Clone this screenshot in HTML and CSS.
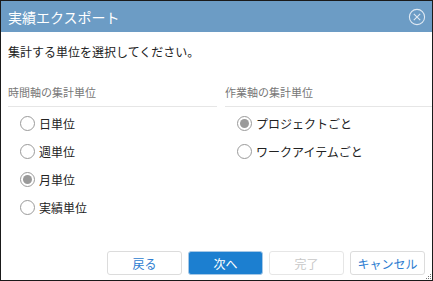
FILE: index.html
```html
<!DOCTYPE html>
<html lang="ja">
<head>
<meta charset="utf-8">
<link rel="stylesheet" href="styles.css">
</head>
<body>
<div class="dialog">
  <div class="titlebar">
    <span class="title">実績エクスポート</span>
    <svg class="close" width="18" height="18" viewBox="0 0 18 18">
      <circle cx="9" cy="9" r="7.6" fill="none" stroke="#dfe9f3" stroke-width="1.1"/>
      <path d="M5.8 5.8 L12.2 12.2 M12.2 5.8 L5.8 12.2" stroke="#dfe9f3" stroke-width="1.1" fill="none"/>
    </svg>
  </div>
  <div class="content">
    <p class="lead">集計する単位を選択してください。</p>
    <div class="groups">
      <div class="group group-left">
        <div class="group-head">時間軸の集計単位</div>
        <ul class="options">
          <li class="option"><span class="radio"></span>日単位</li>
          <li class="option"><span class="radio"></span>週単位</li>
          <li class="option"><span class="radio checked"></span>月単位</li>
          <li class="option"><span class="radio"></span>実績単位</li>
        </ul>
      </div>
      <div class="group group-right">
        <div class="group-head">作業軸の集計単位</div>
        <ul class="options">
          <li class="option"><span class="radio checked"></span>プロジェクトごと</li>
          <li class="option"><span class="radio"></span>ワークアイテムごと</li>
        </ul>
      </div>
    </div>
  </div>
  <div class="footer">
    <button class="btn">戻る</button>
    <button class="btn primary">次へ</button>
    <button class="btn disabled">完了</button>
    <button class="btn">キャンセル</button>
  </div>
  <svg class="grip" width="6" height="6" viewBox="0 0 6 6">
    <rect x="4" y="0" width="1" height="1" fill="#777"/>
    <rect x="2" y="2" width="1" height="1" fill="#777"/>
    <rect x="4" y="2" width="1" height="1" fill="#777"/>
    <rect x="0" y="4" width="1" height="1" fill="#777"/>
    <rect x="2" y="4" width="1" height="1" fill="#777"/>
    <rect x="4" y="4" width="1" height="1" fill="#777"/>
  </svg>
</div>
</body>
</html>
```
FILE: styles.css
```css
* { box-sizing: border-box; }
html, body { margin: 0; padding: 0; background: #fff; }
body {
  font-family: "Noto Sans CJK JP", "Noto Sans", sans-serif;
  color: #222;
}
.dialog {
  position: relative;
  width: 433px;
  height: 281px;
  border: 1px solid #1a1a1a;
  display: flex;
  flex-direction: column;
  background: #fff;
}
.titlebar {
  height: 31px;
  background: #6c9cc5;
  display: flex;
  align-items: center;
  justify-content: space-between;
  padding: 0 6px 0 7px;
}
.title {
  color: #fff;
  font-size: 14px;
  line-height: 1;
}
.close { display: block; margin-top: 0; }
.content { flex: 1; }
.lead {
  margin: 0;
  padding: 12px 7px 0;
  font-size: 12px;
  line-height: 16px;
}
.groups {
  display: grid;
  grid-template-columns: 216px 1fr;
  margin-top: 25px;
}
.group-left { padding-left: 7px; }
.group-right { padding-left: 8px; }
.group-head {
  font-size: 11px;
  color: #777;
  line-height: 14px;
  padding-bottom: 7px;
  border-bottom: 1px solid #e6e6e6;
}
.options {
  list-style: none;
  margin: 0;
  padding: 2px 0 0 12px;
}
.option {
  display: flex;
  align-items: center;
  height: 28px;
  font-size: 12px;
}
.radio {
  width: 15px;
  height: 15px;
  border: 1px solid #9a9a9a;
  border-radius: 50%;
  margin-right: 4px;
  position: relative;
  flex: none;
  background: #fff;
}
.radio.checked::after {
  content: "";
  position: absolute;
  left: 2px; top: 2px;
  width: 9px; height: 9px;
  border-radius: 50%;
  background: #9a9a9a;
}
.footer {
  display: flex;
  justify-content: flex-end;
  gap: 6px;
  padding: 0 7px 5px 0;
}
.btn {
  width: 75px;
  height: 24px;
  border: 1px solid #dcdcdc;
  border-radius: 3px;
  background: #fff;
  color: #2c7cd0;
  font-family: inherit;
  font-size: 12px;
  padding: 0;
}
.btn.primary {
  background: #1c7fd0;
  border-color: #a6c8e6;
  color: #fff;
}
.btn.disabled {
  color: #c8c8c8;
  border-color: #e6e6e6;
}
.grip {
  position: absolute;
  right: 0;
  bottom: 0;
}
```
